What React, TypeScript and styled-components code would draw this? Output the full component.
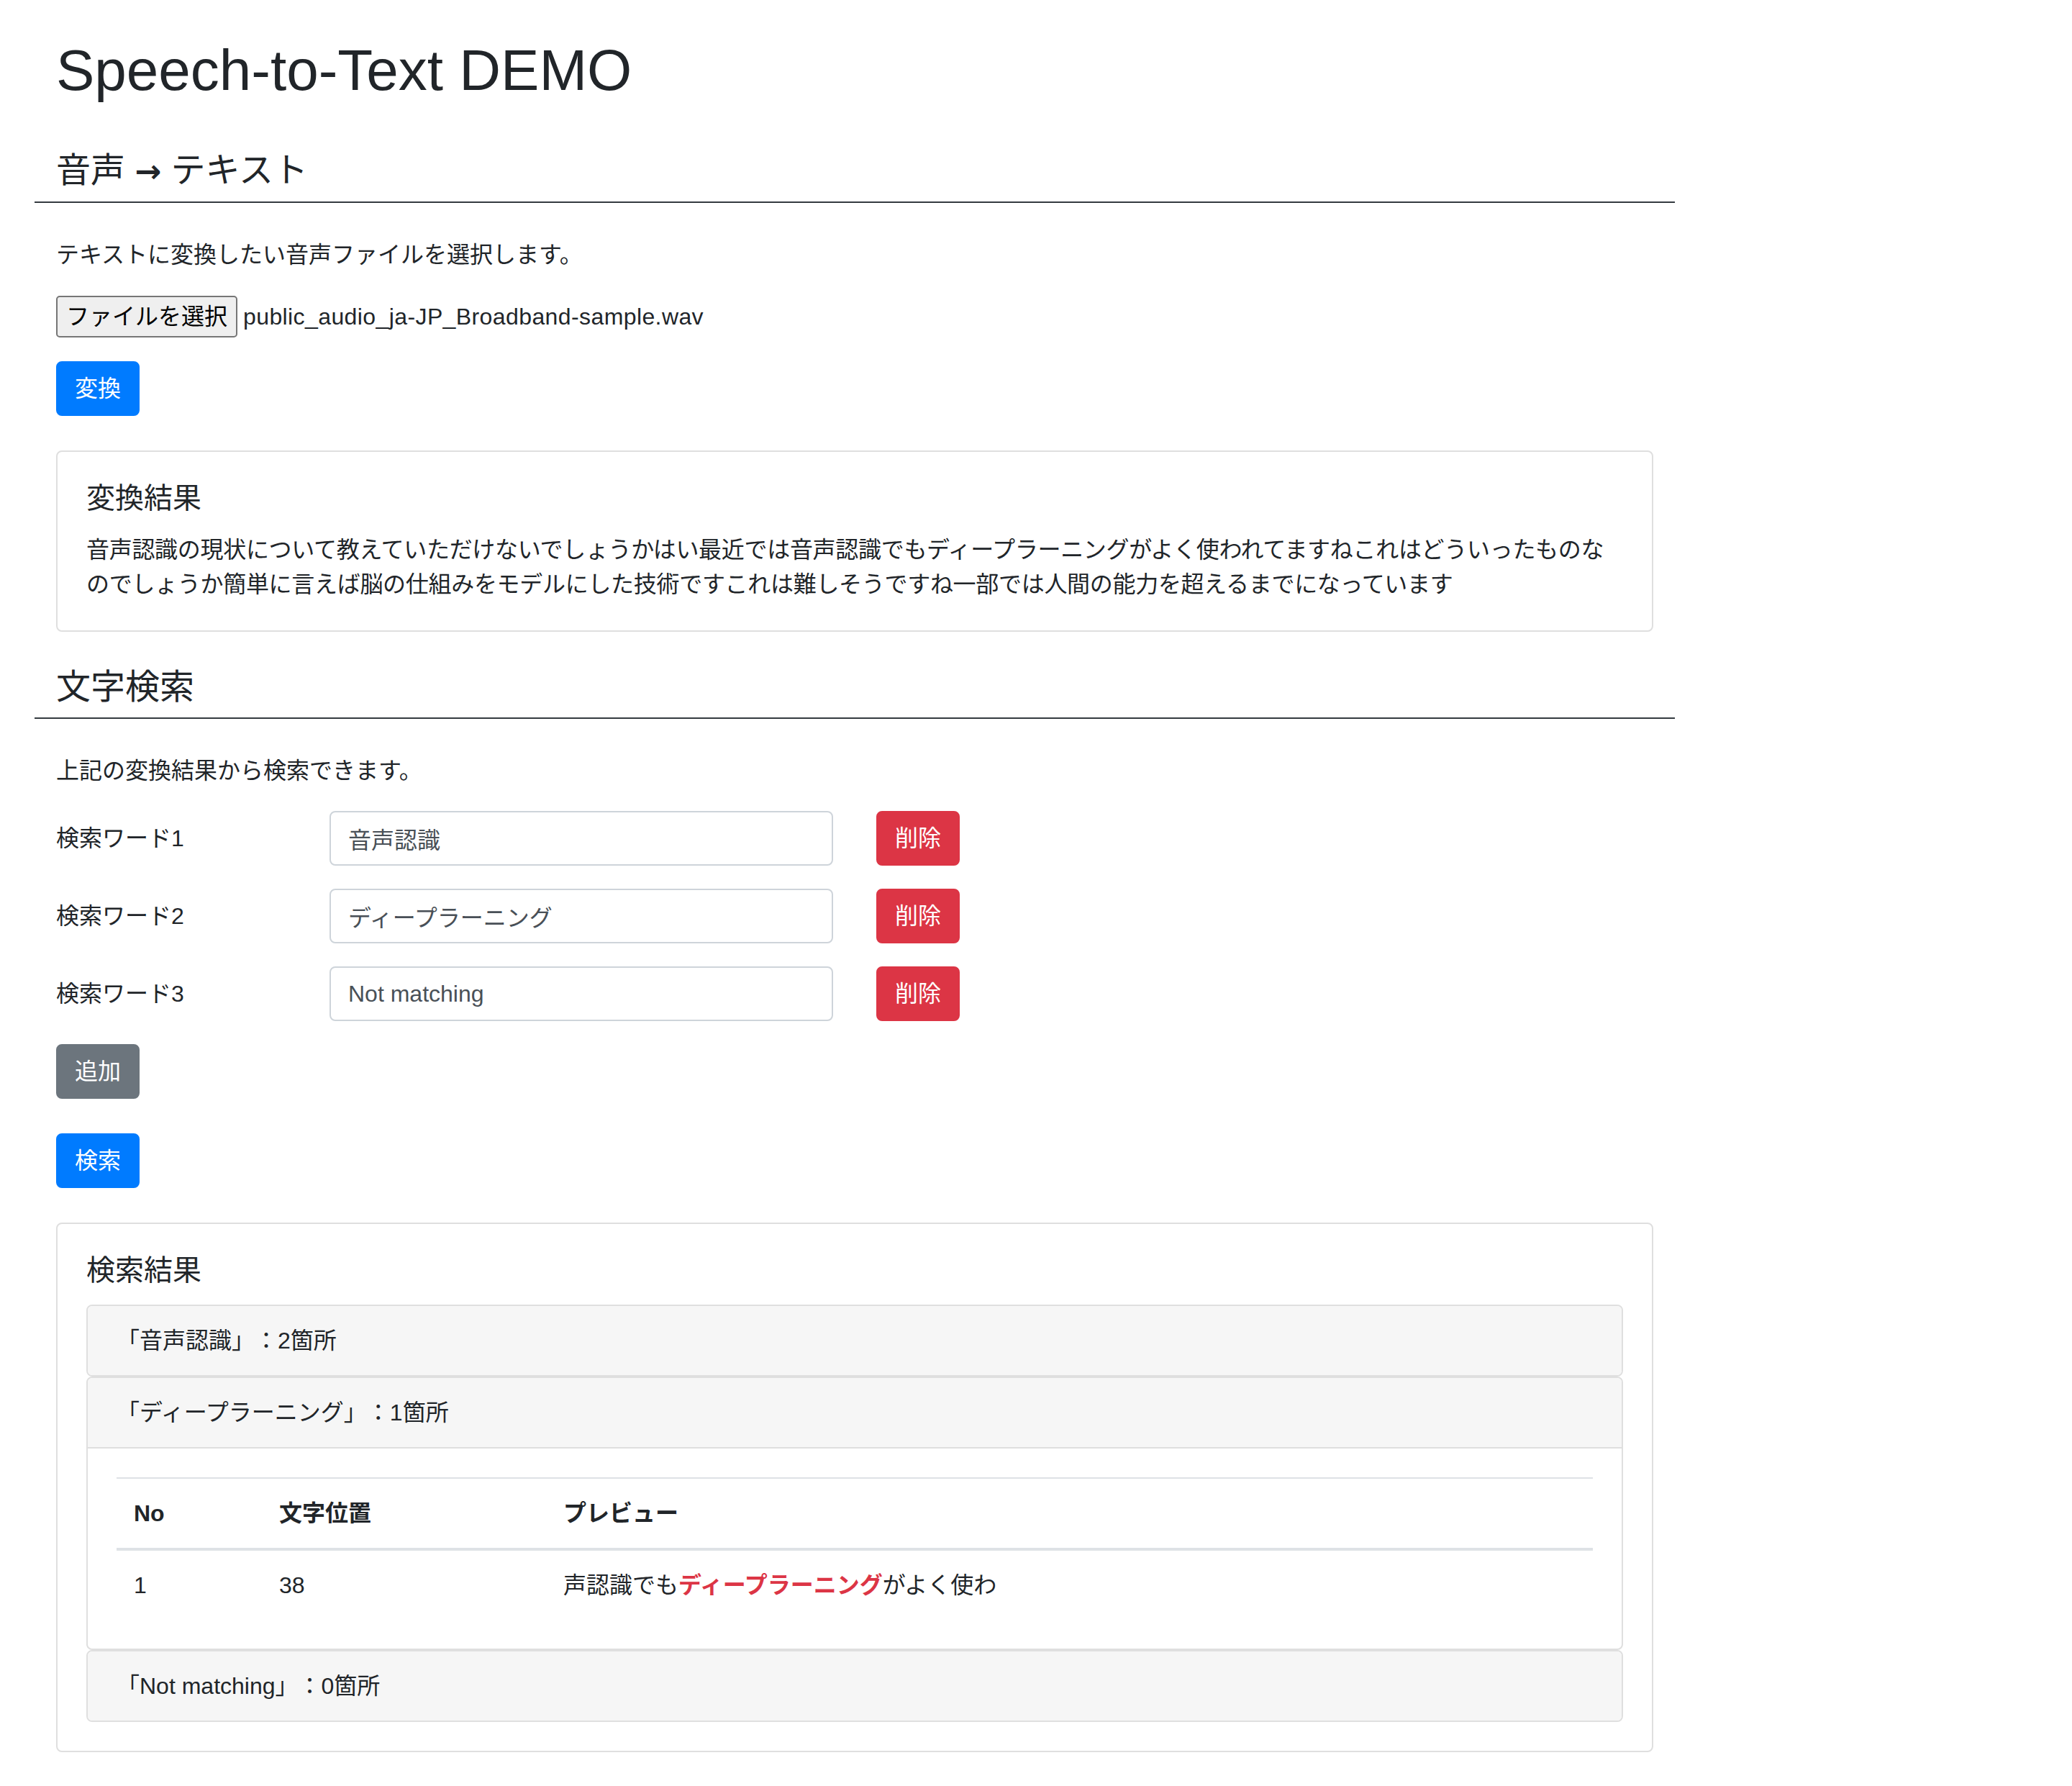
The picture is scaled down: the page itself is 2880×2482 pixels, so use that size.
import React from "react";
import styled, { createGlobalStyle } from "styled-components";

const GlobalStyle = createGlobalStyle`
  *, *::before, *::after { box-sizing: border-box; }
  html, body { margin: 0; padding: 0; background: #ffffff; }
  body {
    font-family: "Liberation Sans", "Noto Sans CJK JP", sans-serif;
    font-size: 32px;
    line-height: 1.5;
    color: #212529;
    text-spacing-trim: space-all;
  }
`;

const Container = styled.main`
  width: 2280px;
  margin-left: 48px;
  padding: 50px 30px 48px;
`;

const Title = styled.h1`
  margin: 0 0 62px;
  font-size: 80px;
  font-weight: 500;
  line-height: 1.2;
`;

const SectionTitle = styled.h4`
  margin: 48px -30px 48px;
  padding: 0 30px 14px;
  font-size: 48px;
  font-weight: 400;
  line-height: 1.2;
  border-bottom: 2px solid #343a40;
`;

const Arrow = styled.span`
  font-family: "DejaVu Sans", sans-serif;
  font-weight: 700;
  font-size: 44px;
`;

const Lead = styled.p`
  margin: 0 0 32px;
`;

const FileRow = styled.div`
  display: flex;
  align-items: center;
  height: 60px;
  margin-bottom: 32px;
`;

const FileButton = styled.span`
  display: inline-block;
  padding: 3px 12px;
  border: 2px solid #767676;
  border-radius: 5px;
  background: #efefef;
  color: #000000;
  font-size: 32px;
  line-height: 48px;
`;

const FileName = styled.span`
  margin-left: 8px;
  color: #212529;
  letter-spacing: 0.4px;
`;

const ActionRow = styled.div<{ $gap: number }>`
  display: flex;
  margin-bottom: ${(p) => p.$gap}px;
`;

const colors = {
  primary: "#007bff",
  danger: "#dc3545",
  secondary: "#6c757d",
};

const Button = styled.button<{ $variant: keyof typeof colors }>`
  display: inline-block;
  justify-self: start;
  padding: 12px 24px;
  border: 2px solid ${(p) => colors[p.$variant]};
  border-radius: 8px;
  background: ${(p) => colors[p.$variant]};
  color: #ffffff;
  font-family: inherit;
  font-size: 32px;
  line-height: 48px;
  cursor: pointer;
`;

const Card = styled.section`
  border: 2px solid #dfdfdf;
  border-radius: 8px;
  padding: 40px;
`;

const CardTitle = styled.h5`
  margin: 0 0 24px;
  font-size: 40px;
  font-weight: 400;
  line-height: 1.2;
`;

const Transcript = styled.p`
  margin: 0;
  letter-spacing: -0.3px;
`;

const SearchRow = styled.div`
  display: grid;
  grid-template-columns: 320px 700px auto;
  column-gap: 60px;
  align-items: center;
  margin-bottom: 32px;
`;

const Label = styled.label`
  display: block;
`;

const TextInput = styled.input`
  width: 100%;
  height: 76px;
  padding: 12px 24px;
  border: 2px solid #ced4da;
  border-radius: 8px;
  background: #ffffff;
  color: #495057;
  font-family: inherit;
  font-size: 32px;
  line-height: 48px;
  outline: none;
`;

const ResultItem = styled.div`
  border: 2px solid #dfdfdf;
  border-radius: 8px;
  overflow: hidden;
`;

const ResultHeader = styled.div<{ $open?: boolean }>`
  padding: 24px 40px;
  background: #f6f6f6;
  line-height: 48px;
  border-bottom: ${(p) => (p.$open ? "2px solid #dfdfdf" : "none")};
`;

const ResultBody = styled.div`
  padding: 40px;
`;

const Table = styled.table`
  width: 100%;
  border-collapse: collapse;
  margin: 0;
`;

const Th = styled.th<{ $width?: number }>`
  width: ${(p) => (p.$width ? `${p.$width}px` : "auto")};
  padding: 24px;
  text-align: left;
  vertical-align: bottom;
  font-weight: 700;
  line-height: 48px;
  border-top: 2px solid #dee2e6;
  border-bottom: 4px solid #dee2e6;
`;

const Td = styled.td`
  padding: 24px;
  text-align: left;
  vertical-align: top;
  line-height: 48px;
  border-top: 2px solid #dee2e6;
`;

const Highlight = styled.span`
  color: #dc3545;
  font-weight: 700;
`;

const transcript =
  "音声認識の現状について教えていただけないでしょうかはい最近では音声認識でもディープラーニングがよく使われてますねこれはどういったものなのでしょうか簡単に言えば脳の仕組みをモデルにした技術ですこれは難しそうですね一部では人間の能力を超えるまでになっています";

const words = ["音声認識", "ディープラーニング", "Not matching"];

export default function App() {
  return (
    <>
      <GlobalStyle />
      <Container>
        <Title>Speech-to-Text DEMO</Title>

        <SectionTitle>
          音声 <Arrow>→</Arrow> テキスト
        </SectionTitle>
        <Lead>テキストに変換したい音声ファイルを選択します。</Lead>
        <FileRow>
          <FileButton>ファイルを選択</FileButton>
          <FileName>public_audio_ja-JP_Broadband-sample.wav</FileName>
        </FileRow>
        <ActionRow $gap={48}>
          <Button $variant="primary">変換</Button>
        </ActionRow>

        <Card>
          <CardTitle>変換結果</CardTitle>
          <Transcript>{transcript}</Transcript>
        </Card>

        <SectionTitle>文字検索</SectionTitle>
        <Lead>上記の変換結果から検索できます。</Lead>
        {words.map((w, i) => (
          <SearchRow key={w}>
            <Label>検索ワード{i + 1}</Label>
            <TextInput value={w} readOnly />
            <Button $variant="danger">削除</Button>
          </SearchRow>
        ))}
        <ActionRow $gap={48}>
          <Button $variant="secondary">追加</Button>
        </ActionRow>
        <ActionRow $gap={48}>
          <Button $variant="primary">検索</Button>
        </ActionRow>

        <Card>
          <CardTitle>検索結果</CardTitle>
          <ResultItem>
            <ResultHeader>「音声認識」：2箇所</ResultHeader>
          </ResultItem>
          <ResultItem>
            <ResultHeader $open>「ディープラーニング」：1箇所</ResultHeader>
            <ResultBody>
              <Table>
                <thead>
                  <tr>
                    <Th $width={202}>No</Th>
                    <Th $width={395}>文字位置</Th>
                    <Th>プレビュー</Th>
                  </tr>
                </thead>
                <tbody>
                  <tr>
                    <Td>1</Td>
                    <Td>38</Td>
                    <Td>
                      声認識でも<Highlight>ディープラーニング</Highlight>がよく使わ
                    </Td>
                  </tr>
                </tbody>
              </Table>
            </ResultBody>
          </ResultItem>
          <ResultItem>
            <ResultHeader>「Not matching」：0箇所</ResultHeader>
          </ResultItem>
        </Card>
      </Container>
    </>
  );
}
